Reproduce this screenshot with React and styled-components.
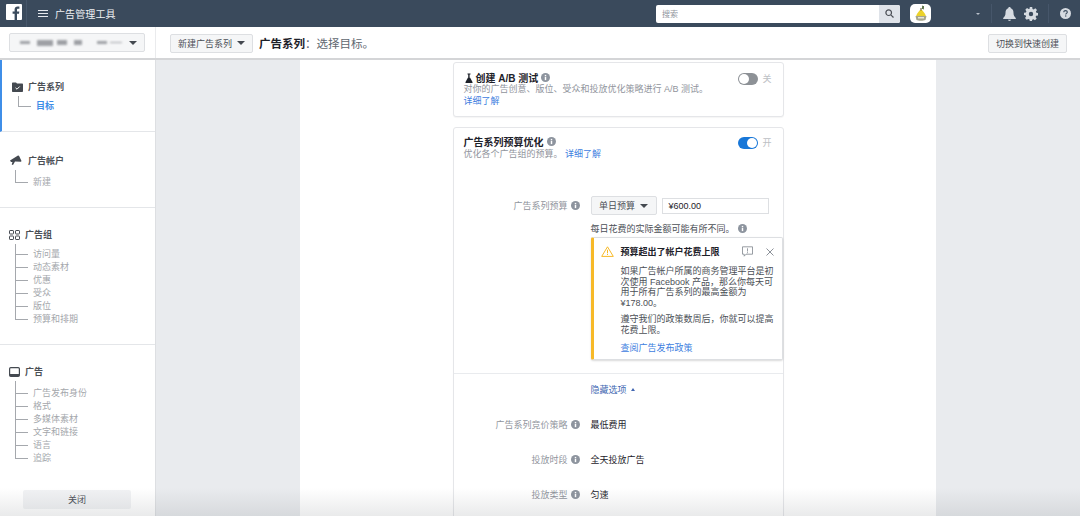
import React from "react";
import styled, { createGlobalStyle } from "styled-components";

const GlobalStyle = createGlobalStyle`
  html, body {
    margin: 0;
    padding: 0;
    height: 516px;
    overflow: hidden;
    background: #fff;
    font-family: "Liberation Sans", "Noto Sans CJK SC", sans-serif;
    -webkit-font-smoothing: antialiased;
  }
  * { box-sizing: border-box; }
`;

const InfoSvg = styled.svg`
  flex: none;
  margin-left: 3px;
`;

const InfoIcon = ({ size = 9 }) => (
  <InfoSvg width={size} height={size} viewBox="0 0 10 10">
    <circle cx="5" cy="5" r="5" fill="#8d949e" />
    <rect x="4.2" y="4.3" width="1.6" height="3.6" fill="#fff" />
    <rect x="4.2" y="2.1" width="1.6" height="1.5" fill="#fff" />
  </InfoSvg>
);

const Caret = styled.span`
  display: inline-block;
  flex: none;
  width: 0;
  height: 0;
  margin-left: ${(p) => (p.$push ? "auto" : "0")};
  border-left: ${(p) => p.$size || 4}px solid transparent;
  border-right: ${(p) => p.$size || 4}px solid transparent;
  border-top: ${(p) => p.$size || 4}px solid ${(p) => p.$color || "#4b4f56"};
`;

const Page = styled.div`
  width: 1080px;
  height: 516px;
  position: relative;
  overflow: hidden;
  display: flex;
  flex-direction: column;
`;

const TopBar = styled.div`
  height: 27px;
  flex: none;
  background: #3a4a5c;
  display: flex;
  align-items: center;
  color: #fff;
`;

const Logo = styled.div`
  width: 27px;
  height: 27px;
  padding: 4px 0 0 6px;
  border-right: 1px solid #46566a;
  flex: none;
`;

const Burger = styled.div`
  margin-left: 11px;
  width: 10px;
  display: flex;
  flex-direction: column;
  gap: 2px;
  span {
    height: 1px;
    background: #e6e9ee;
  }
`;

const AppName = styled.div`
  margin-left: 7px;
  font-size: 10px;
  letter-spacing: 0.1px;
  color: #eef0f3;
`;

const TopRight = styled.div`
  margin-left: auto;
  display: flex;
  align-items: center;
  height: 100%;
`;

const Search = styled.div`
  width: 244px;
  height: 18px;
  background: #fff;
  border-radius: 2px;
  display: flex;
  align-items: center;
  justify-content: space-between;
  font-size: 8px;
  color: #90949c;
  padding-left: 6px;
  overflow: hidden;
`;

const SearchBtn = styled.div`
  width: 21px;
  height: 18px;
  background: #dfe3e9;
  display: flex;
  align-items: center;
  justify-content: center;
`;

const Avatar = styled.div`
  width: 21px;
  height: 19px;
  margin-left: 10px;
  border-radius: 5px;
  background: #fff;
  display: flex;
  align-items: center;
  justify-content: center;
`;

const TopCaret = styled.div`
  margin-left: 45px;
  display: flex;
  align-items: center;
`;

const Divider = styled.div`
  width: 1px;
  height: 19px;
  background: #46566a;
  margin-left: ${(p) => p.$left}px;
`;

const TopIcon = styled.div`
  display: flex;
  align-items: center;
  margin-left: ${(p) => p.$left || 0}px;
`;

const SubBar = styled.div`
  height: 33px;
  flex: none;
  display: flex;
  background: #fff;
  border-bottom: 2px solid #d4d5d7;
`;

const AccountCell = styled.div`
  width: 156px;
  flex: none;
  padding: 6px 0 0 9px;
  border-right: 1px solid #eaebed;
`;

const AccountPicker = styled.div`
  width: 136px;
  height: 19px;
  background: #f5f6f7;
  border: 1px solid #dddfe2;
  border-radius: 2px;
  display: flex;
  align-items: center;
  padding: 0 7px 0 10px;
`;

const Smudge = styled.span`
  display: block;
  width: ${(p) => p.$w}px;
  height: ${(p) => p.$h || 3}px;
  margin-left: ${(p) => p.$gap || 0}px;
  background: #8f9297;
  filter: blur(0.8px);
  opacity: 0.85;
`;

const ToolRow = styled.div`
  flex: 1;
  display: flex;
  align-items: center;
  padding: 1px 13px 0 14px;
`;

const GreyButton = styled.div`
  height: 19px;
  padding: 0 7px;
  background: #f5f6f7;
  border: 1px solid #dddfe2;
  border-radius: 2px;
  font-size: 9px;
  color: #4b4f56;
  display: flex;
  align-items: center;
  gap: 5px;
  white-space: nowrap;
  flex: none;
`;

const SwitchButton = styled(GreyButton)`
  margin-left: auto;
`;

const HeadTitle = styled.div`
  margin-left: 6px;
  font-size: 11.5px;
  color: #606770;
  white-space: nowrap;
  b {
    color: #1d2129;
    font-weight: 700;
  }
`;

const Main = styled.div`
  flex: 1;
  display: flex;
  min-height: 0;
`;

const Sidebar = styled.div`
  width: 156px;
  flex: none;
  background: #fff;
  border-right: 1px solid #dddfe2;
  display: flex;
  flex-direction: column;
`;

const Section = styled.div`
  height: ${(p) => p.$h}px;
  flex: none;
  padding: ${(p) => p.$top}px 0 0 ${(p) => p.$left}px;
  border-bottom: ${(p) => (p.$last ? "none" : "1px solid #e4e6e9")};
  border-left: ${(p) => (p.$active ? "2px solid #3f8ee8" : "none")};
`;

const SectionHead = styled.div`
  display: flex;
  align-items: center;
  gap: ${(p) => p.$gap || 5}px;
  font-size: 9px;
  font-weight: 700;
  color: #4b4f56;
  height: 13px;
`;

const Tree = styled.div`
  margin: 3px 0 0 ${(p) => p.$left}px;
  padding-top: ${(p) => p.$gap - 3}px;
  border-left: 1px solid #a5a8ad;
  display: flex;
  flex-direction: column;
`;

const TreeItem = styled.div`
  height: 13px;
  display: flex;
  align-items: center;
  font-size: 9px;
  color: ${(p) => (p.$active ? "#3f8ee8" : "#a4a7ac")};
  font-weight: ${(p) => (p.$active ? 700 : 400)};
  padding-left: 17px;
  position: relative;
  white-space: nowrap;
  &::before {
    content: "";
    position: absolute;
    left: 0;
    top: 7px;
    width: 12px;
    height: 1px;
    background: #a5a8ad;
  }
  &:last-child::after {
    content: "";
    position: absolute;
    left: -1px;
    top: 8px;
    width: 1px;
    height: 5px;
    background: #fff;
  }
`;

const CloseButton = styled.div`
  margin: 26px 0 0 14px;
  width: 108px;
  height: 19px;
  background: #f1f2f4;
  border-radius: 2px;
  display: flex;
  align-items: center;
  justify-content: center;
  font-size: 9px;
  color: #4b4f56;
`;

const Canvas = styled.div`
  flex: 1;
  background: #e9ebee;
  display: flex;
  justify-content: center;
  min-width: 0;
`;

const Panel = styled.div`
  width: 636px;
  background: #fff;
  display: flex;
  flex-direction: column;
  align-items: center;
  flex: none;
  padding-top: 2px;
  overflow: hidden;
`;

const Card = styled.div`
  width: 331px;
  background: #fff;
  border: 1px solid #e5e6e9;
  border-radius: 3px;
  box-shadow: 0 1px 1px rgba(0, 0, 0, 0.04);
  flex: none;
  position: relative;
  margin-bottom: ${(p) => p.$bottom || 0}px;
  height: ${(p) => p.$h || "auto"};
  padding-bottom: ${(p) => p.$tail || 0}px;
`;

const CardHead = styled.div`
  padding: ${(p) => p.$top}px 0 0 10px;
`;

const CardTitle = styled.div`
  display: flex;
  align-items: center;
  font-size: 10px;
  font-weight: 700;
  color: #1d2129;
  height: 13px;
`;

const CardDesc = styled.div`
  font-size: 9px;
  line-height: 11px;
  color: #90949c;
  white-space: nowrap;
  margin-top: ${(p) => p.$top || 0}px;
`;

const Link = styled.span`
  color: #4080e0;
  font-size: 9px;
  line-height: 11px;
`;

const BlockLink = styled(Link)`
  display: block;
  margin-top: ${(p) => p.$top || 0}px;
`;

const ToggleWrap = styled.div`
  position: absolute;
  top: ${(p) => p.$top}px;
  right: 11px;
  display: flex;
  align-items: center;
  gap: 4px;
  font-size: 9px;
  color: #bcc0c4;
`;

const Toggle = styled.div`
  width: 20px;
  height: 12px;
  border-radius: 6px;
  background: ${(p) => (p.$on ? "#1877d8" : "#8d9196")};
  display: flex;
  justify-content: ${(p) => (p.$on ? "flex-end" : "flex-start")};
  padding: 1px;
  span {
    width: 10px;
    height: 10px;
    border-radius: 50%;
    background: #fff;
  }
`;

const FormRow = styled.div`
  display: flex;
  align-items: center;
  margin-top: ${(p) => p.$top || 0}px;
  height: ${(p) => p.$h}px;
`;

const Label = styled.div`
  width: 126px;
  flex: none;
  display: flex;
  justify-content: flex-end;
  align-items: center;
  font-size: 9px;
  color: #90949c;
  white-space: nowrap;
`;

const Value = styled.div`
  margin-left: 11px;
  font-size: 9px;
  color: #1d2129;
  display: flex;
  align-items: center;
`;

const BudgetSelect = styled(GreyButton)`
  width: 66px;
  padding: 0;
  justify-content: center;
  margin-left: 11px;
`;

const BudgetInput = styled.div`
  width: 107px;
  height: 16px;
  border: 1px solid #dddfe2;
  margin-left: 5px;
  font-size: 9px;
  color: #1d2129;
  display: flex;
  align-items: center;
  padding-left: 6px;
`;

const Note = styled.div`
  margin: 7px 0 0 137px;
  font-size: 9px;
  color: #4b4f56;
  display: flex;
  align-items: center;
  height: 12px;
  white-space: nowrap;
`;

const Warning = styled.div`
  margin: 3px 0 0 137px;
  width: 192px;
  height: 123px;
  background: #fff;
  border: 1px solid #dddfe2;
  border-left: 3px solid #f7b928;
  border-radius: 2px;
  box-shadow: 0 1px 2px rgba(0, 0, 0, 0.15);
  padding: 7px 8px 0 7px;
  display: flex;
  flex-direction: column;
`;

const WarnHead = styled.div`
  display: flex;
  align-items: center;
  height: 13px;
  font-size: 9px;
  font-weight: 700;
  color: #1d2129;
  gap: 7px;
  white-space: nowrap;
`;

const WarnActions = styled.div`
  margin-left: auto;
  display: flex;
  align-items: center;
  gap: 13px;
`;

const WarnBody = styled.div`
  margin: ${(p) => p.$top}px 0 0 20px;
  font-size: 9px;
  line-height: 10.6px;
  color: #4b4f56;
  white-space: nowrap;
`;

const WarnLink = styled(BlockLink)`
  margin: 7px 0 0 20px;
`;

const Separator = styled.div`
  height: 1px;
  background: #e9ebee;
  margin-top: 13px;
`;

const HideLink = styled.div`
  margin: 9px 0 0 137px;
  height: 12px;
  font-size: 9px;
  color: #4267b2;
  display: flex;
  align-items: center;
  gap: 4px;
`;

const UpCaret = styled.span`
  width: 0;
  height: 0;
  border-left: 2.5px solid transparent;
  border-right: 2.5px solid transparent;
  border-bottom: 3px solid #4267b2;
`;

const BottomFade = styled.div`
  position: absolute;
  left: 0;
  right: 0;
  bottom: 0;
  height: 28px;
  background: linear-gradient(rgba(120, 125, 130, 0), rgba(120, 125, 130, 0.16));
  pointer-events: none;
`;

const FlaskSvg = styled.svg`
  margin: 0 3px 0 1px;
  flex: none;
`;

const FbLogo = () => (
  <svg width="16" height="16" viewBox="0 0 16 16">
    <rect width="16" height="16" rx="1" fill="#fff" />
    <path
      d="M11 16V9.8h2l.3-2.4H11V5.900c0-.7.2-1.200 1.200-1.200h1.200V2.600c-.2 0-.9-.1-1.800-.1-1.800 0-3 1.100-3 3.100v1.800H6.600v2.400h2V16z"
      fill="#3a4a5c"
    />
  </svg>
);

const PearAvatar = () => (
  <svg width="16" height="17" viewBox="0 0 16 17">
    <path d="M7 5C5 7 3 10 3 12h10c0-2-2-5-4-7z" fill="#ecd22a" />
    <path d="M9 1l2 1-2 1 2 1" stroke="#3c5a24" strokeWidth="1" fill="none" />
    <rect x="7.500" y="3" width="1" height="2.500" fill="#5a4a20" />
    <path d="M2.500 11h11l-1 4c-2 1-7 1-9 0z" fill="#a7a68d" />
    <rect x="5" y="12" width="6" height="1.500" fill="#e8e6d6" />
  </svg>
);

const FolderCheck = () => (
  <svg width="11" height="10" viewBox="0 0 11 10">
    <path d="M0 1.500C0 .9.400.500 1 .500h3l1 1h5c.6 0 1 .4 1 1V9c0 .6-.4 1-1 1H1c-.6 0-1-.4-1-1z" fill="#444950" />
    <path d="M3.500 5.800l1.500 1.400 2.700-2.700" stroke="#fff" strokeWidth="1" fill="none" />
  </svg>
);

const Megaphone = () => (
  <svg width="13" height="11" viewBox="0 0 13 11">
    <path d="M0 5.500L8 .500l1 .2 2.500 5.300-.5.700-6-.2-2 3.500-1.300-.5.800-2.500H1z" fill="#444950" />
  </svg>
);

const GridIcon = () => (
  <svg width="11" height="10" viewBox="0 0 11 10" fill="none" stroke="#444950" strokeWidth="1">
    <rect x=".5" y=".5" width="4" height="3.500" rx=".6" />
    <rect x="6.500" y=".5" width="4" height="3.500" rx=".6" />
    <rect x=".5" y="6" width="4" height="3.500" rx=".6" />
    <rect x="6.500" y="6" width="4" height="3.500" rx=".6" />
  </svg>
);

const ScreenIcon = () => (
  <svg width="11" height="10" viewBox="0 0 11 10" fill="none">
    <rect x=".6" y=".6" width="9.800" height="8.800" rx="1.200" stroke="#444950" strokeWidth="1.200" />
    <rect x="1" y="7" width="9" height="2" fill="#444950" />
  </svg>
);

const Flask = () => (
  <FlaskSvg width="8" height="10" viewBox="0 0 8 10">
    <path d="M2.500 .5h3v1h-.5v3L7.500 9v1H.5V9L3 4.500v-3h-.5z" fill="#1d2129" />
    <path d="M3.800 1.500h.6v3.200l-.6 0z" fill="#fff" />
  </FlaskSvg>
);

const treeGroup3 = ["访问量", "动态素材", "优惠", "受众", "版位", "预算和排期"];
const treeGroup4 = ["广告发布身份", "格式", "多媒体素材", "文字和链接", "语言", "追踪"];

export default function App() {
  return (
    <Page>
      <GlobalStyle />
      <TopBar>
        <Logo>
          <FbLogo />
        </Logo>
        <Burger>
          <span />
          <span />
          <span />
        </Burger>
        <AppName>广告管理工具</AppName>
        <TopRight>
          <Search>
            搜索
            <SearchBtn>
              <svg width="9" height="9" viewBox="0 0 9 9" fill="none" stroke="#4b4f56" strokeWidth="1.200">
                <circle cx="3.700" cy="3.700" r="2.800" />
                <path d="M5.800 5.800L8.500 8.500" />
              </svg>
            </SearchBtn>
          </Search>
          <Avatar>
            <PearAvatar />
          </Avatar>
          <TopCaret>
            <Caret $size={2} $color="#b8c0ca" />
          </TopCaret>
          <Divider $left={11} />
          <TopIcon $left={11}>
            <svg width="13" height="14" viewBox="0 0 13 14">
              <path d="M6.500 0C7.300 0 7.800.6 7.800 1.300 9.800 2 10.500 3.600 10.500 6c0 2.500 1 3.800 2.300 5v1H.2v-1C1.500 9.800 2.500 8.500 2.500 6c0-2.400.7-4 2.700-4.700C5.200.6 5.700 0 6.500 0zM5 12.800h3C8 13.500 7.300 14 6.500 14S5 13.500 5 12.800z" fill="#d6dbe1" />
            </svg>
          </TopIcon>
          <TopIcon $left={8}>
            <svg width="14" height="14" viewBox="0 0 14 14">
              <path
                fillRule="evenodd"
                d="M5.800 0h2.400l.3 1.900 1.200.5L11.300 1.300 13 3l-1.100 1.600.5 1.200 1.600.3v2.400l-1.900.3-.5 1.200 1.100 1.600-1.700 1.700-1.600-1.100-1.200.5-.3 1.700H5.800l-.3-1.900-1.200-.5L2.700 12.700 1 11l1.100-1.600-.5-1.200L0 7.900V5.800l1.900-.3.5-1.200L1.300 2.700 3 1l1.600 1.100 1-.4zM7 4.800a2.200 2.200 0 100 4.400 2.200 2.200 0 000-4.400z"
                fill="#d6dbe1"
              />
            </svg>
          </TopIcon>
          <Divider $left={10} />
          <TopIcon $left={11}>
            <svg width="11" height="11" viewBox="0 0 11 11">
              <circle cx="5.500" cy="5.500" r="5.500" fill="#d6dbe1" />
              <path d="M3.800 4.200C3.800 3.200 4.500 2.600 5.500 2.600s1.800.6 1.800 1.500c0 1.300-1.600 1.300-1.600 2.500" stroke="#3a4a5c" strokeWidth="1.100" fill="none" />
              <rect x="5.100" y="7.400" width="1.200" height="1.200" fill="#3a4a5c" />
            </svg>
          </TopIcon>
          <TopIcon $left={9} />
        </TopRight>
      </TopBar>

      <SubBar>
        <AccountCell>
          <AccountPicker>
            <Smudge $w={10} $h={3} />
            <Smudge $w={16} $gap={7} $h={6} />
            <Smudge $w={10} $gap={4} $h={5} />
            <Smudge $w={8} $gap={7} $h={5} />
            <Smudge $w={10} $gap={15} $h={3} />
            <Smudge $w={12} $gap={3} $h={1} />
            <Caret $push $color="#444950" />
          </AccountPicker>
        </AccountCell>
        <ToolRow>
          <GreyButton>
            新建广告系列
            <Caret $color="#444950" />
          </GreyButton>
          <HeadTitle>
            <b>广告系列</b>：选择目标。
          </HeadTitle>
          <SwitchButton>切换到快速创建</SwitchButton>
        </ToolRow>
      </SubBar>

      <Main>
        <Sidebar>
          <Section $h={72} $top={20} $left={10} $active>
            <SectionHead>
              <FolderCheck />
              广告系列
            </SectionHead>
            <Tree $left={6} $gap={6}>
              <TreeItem $active>目标</TreeItem>
            </Tree>
          </Section>
          <Section $h={76} $top={22} $left={10}>
            <SectionHead>
              <Megaphone />
              广告帐户
            </SectionHead>
            <Tree $left={5} $gap={8}>
              <TreeItem>新建</TreeItem>
            </Tree>
          </Section>
          <Section $h={137} $top={20} $left={9}>
            <SectionHead>
              <GridIcon />
              广告组
            </SectionHead>
            <Tree $left={6} $gap={6}>
              {treeGroup3.map((t) => (
                <TreeItem key={t}>{t}</TreeItem>
              ))}
            </Tree>
          </Section>
          <Section $h={171} $top={20} $left={9} $last>
            <SectionHead>
              <ScreenIcon />
              广告
            </SectionHead>
            <Tree $left={6} $gap={8}>
              {treeGroup4.map((t) => (
                <TreeItem key={t}>{t}</TreeItem>
              ))}
            </Tree>
            <CloseButton>关闭</CloseButton>
          </Section>
        </Sidebar>

        <Canvas>
          <Panel>
            <Card $bottom={10} $h="55px">
              <CardHead $top={8}>
                <CardTitle>
                  <Flask />
                  创建 A/B 测试
                  <InfoIcon />
                </CardTitle>
                <CardDesc>对你的广告创意、版位、受众和投放优化策略进行 A/B 测试。</CardDesc>
                <BlockLink $top={1}>详细了解</BlockLink>
              </CardHead>
              <ToggleWrap $top={9}>
                <Toggle>
                  <span />
                </Toggle>
                关
              </ToggleWrap>
            </Card>
            <Card $tail={40}>
              <CardHead $top={7}>
                <CardTitle>
                  广告系列预算优化
                  <InfoIcon />
                </CardTitle>
                <CardDesc $top={1}>
                  优化各个广告组的预算。 <Link>详细了解</Link>
                </CardDesc>
              </CardHead>
              <ToggleWrap $top={8}>
                <Toggle $on>
                  <span />
                </Toggle>
                开
              </ToggleWrap>
              <FormRow $top={36} $h={19}>
                <Label>
                  广告系列预算
                  <InfoIcon />
                </Label>
                <BudgetSelect>
                  单日预算
                  <Caret $color="#444950" />
                </BudgetSelect>
                <BudgetInput>¥600.00</BudgetInput>
              </FormRow>
              <Note>
                每日花费的实际金额可能有所不同。
                <InfoIcon />
              </Note>
              <Warning>
                <WarnHead>
                  <svg width="13" height="11" viewBox="0 0 13 11" fill="none">
                    <path d="M6.500 .8L12.300 10.400H.7z" stroke="#f7b928" strokeWidth="1" strokeLinejoin="round" />
                    <path d="M6.500 3.800v3.500M6.500 8v1" stroke="#f7b928" strokeWidth="1" />
                  </svg>
                  预算超出了帐户花费上限
                  <WarnActions>
                    <svg width="11" height="11" viewBox="0 0 11 11" fill="none" stroke="#7f858d" strokeWidth="0.800">
                      <path d="M.5 .8h10v7.400H4L2.200 10.200V8.200H.5z" />
                      <path d="M5.500 2.300v3.200M5.500 6.200v1" />
                    </svg>
                    <svg width="8" height="8" viewBox="0 0 8 8" stroke="#7f858d" strokeWidth="0.900">
                      <path d="M.5 .5l7 7M7.500 .5l-7 7" />
                    </svg>
                  </WarnActions>
                </WarnHead>
                <WarnBody $top={8}>
                  如果广告帐户所属的商务管理平台是初
                  <br />
                  次使用 Facebook 产品，那么你每天可
                  <br />
                  用于所有广告系列的最高金额为
                  <br />
                  ¥178.00。
                </WarnBody>
                <WarnBody $top={6}>
                  遵守我们的政策数周后，你就可以提高
                  <br />
                  花费上限。
                </WarnBody>
                <WarnLink>查阅广告发布政策</WarnLink>
              </Warning>
              <Separator />
              <HideLink>
                隐藏选项
                <UpCaret />
              </HideLink>
              <FormRow $top={23} $h={13}>
                <Label>
                  广告系列竞价策略
                  <InfoIcon />
                </Label>
                <Value>最低费用</Value>
              </FormRow>
              <FormRow $top={22} $h={13}>
                <Label>
                  投放时段
                  <InfoIcon />
                </Label>
                <Value>全天投放广告</Value>
              </FormRow>
              <FormRow $top={22} $h={13}>
                <Label>
                  投放类型
                  <InfoIcon />
                </Label>
                <Value>匀速</Value>
              </FormRow>
            </Card>
          </Panel>
        </Canvas>
      </Main>
      <BottomFade />
    </Page>
  );
}
